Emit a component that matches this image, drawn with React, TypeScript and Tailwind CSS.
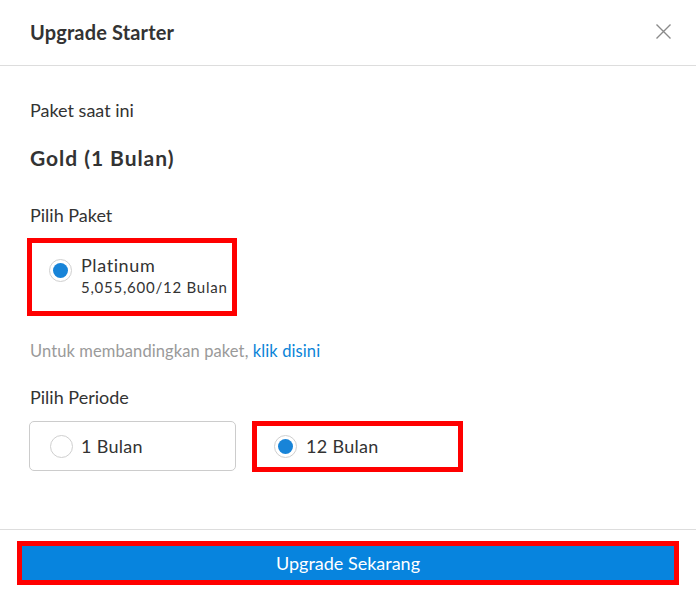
import { useState } from 'react'

const font = { fontFamily: '"Lato", "Noto Sans", sans-serif' }

function Radio({ checked }: { checked: boolean }) {
  return (
    <span className="w-[23px] h-[23px] rounded-full border border-[#cfcfcf] bg-white flex items-center justify-center shrink-0">
      {checked && <span className="w-[15px] h-[15px] rounded-full bg-[#1884d8]" />}
    </span>
  )
}

export default function App() {
  const [period, setPeriod] = useState<'1' | '12'>('12')

  return (
    <div className="w-[696px] h-[593px] bg-white flex flex-col text-[#333333]" style={font}>
      {/* Header */}
      <div className="h-[66px] border-b border-[#dddddd] flex items-center justify-between pl-[30px] pr-[24px] pb-[2px] shrink-0">
        <h1 className="text-[20px] font-bold tracking-[0.15px] text-[#333333]">Upgrade Starter</h1>
        <button type="button" className="text-[#8a8a8a]" aria-label="Close">
          <svg width="17" height="17" viewBox="0 0 17 17" fill="none" stroke="currentColor" strokeWidth="1.4">
            <path d="M1.5 1.5l14 14M15.5 1.5l-14 14" />
          </svg>
        </button>
      </div>

      {/* Body */}
      <div className="flex-1 pl-[30px] pt-[32px]">
        <p className="text-[18px] leading-[24px]">Paket saat ini</p>
        <p className="mt-[22px] text-[21px] leading-[28px] font-bold tracking-[0.95px]">Gold (1 Bulan)</p>

        <p className="mt-[31px] text-[18px] leading-[24px]">Pilih Paket</p>
        <div className="mt-[11px] -ml-[3px] w-[210px] h-[78px] border-[5px] border-[#ff0000] flex items-start pl-[17px] pt-[11px] gap-[9px]">
          <div className="pt-[5px]">
            <Radio checked />
          </div>
          <div>
            <p className="text-[18px] leading-[22px] tracking-[0.6px]">Platinum</p>
            <p className="text-[15px] leading-[22px] tracking-[0.75px]">5,055,600/12 Bulan</p>
          </div>
        </div>

        <p className="mt-[24px] text-[16.5px] leading-[22px] tracking-[0.1px] text-[#9a9a9a]">
          Untuk membandingkan paket, <a className="text-[#0a84d8] cursor-pointer">klik disini</a>
        </p>

        <p className="mt-[23px] text-[18px] leading-[24px]">Pilih Periode</p>
        <div className="mt-[12px] flex items-start gap-[16px] -ml-[1px]">
          <button
            type="button"
            onClick={() => setPeriod('1')}
            className={
              period === '1'
                ? 'w-[211px] h-[51px] border-[5px] border-[#ff0000] flex items-center pl-[17px] gap-[9px]'
                : 'w-[207px] h-[50px] rounded-[5px] border border-[#cccccc] flex items-center pl-[20px] gap-[8px]'
            }
          >
            <Radio checked={period === '1'} />
            <span className="text-[18px] tracking-[0.3px]">1 Bulan</span>
          </button>
          <button
            type="button"
            onClick={() => setPeriod('12')}
            className={
              period === '12'
                ? 'w-[211px] h-[51px] border-[5px] border-[#ff0000] flex items-center pl-[17px] gap-[9px]'
                : 'w-[207px] h-[50px] rounded-[5px] border border-[#cccccc] flex items-center pl-[20px] gap-[8px]'
            }
          >
            <Radio checked={period === '12'} />
            <span className="text-[18px] tracking-[0.3px]">12 Bulan</span>
          </button>
        </div>
      </div>

      {/* Footer */}
      <div className="border-t border-[#dddddd] px-[17px] pt-[11px] pb-[8px] shrink-0">
        <div className="h-[44px] border-[5px] border-[#ff0000]">
          <button type="button" className="w-full h-full bg-[#0784de] text-white text-[18px] flex items-center justify-center">
            Upgrade Sekarang
          </button>
        </div>
      </div>
    </div>
  )
}
